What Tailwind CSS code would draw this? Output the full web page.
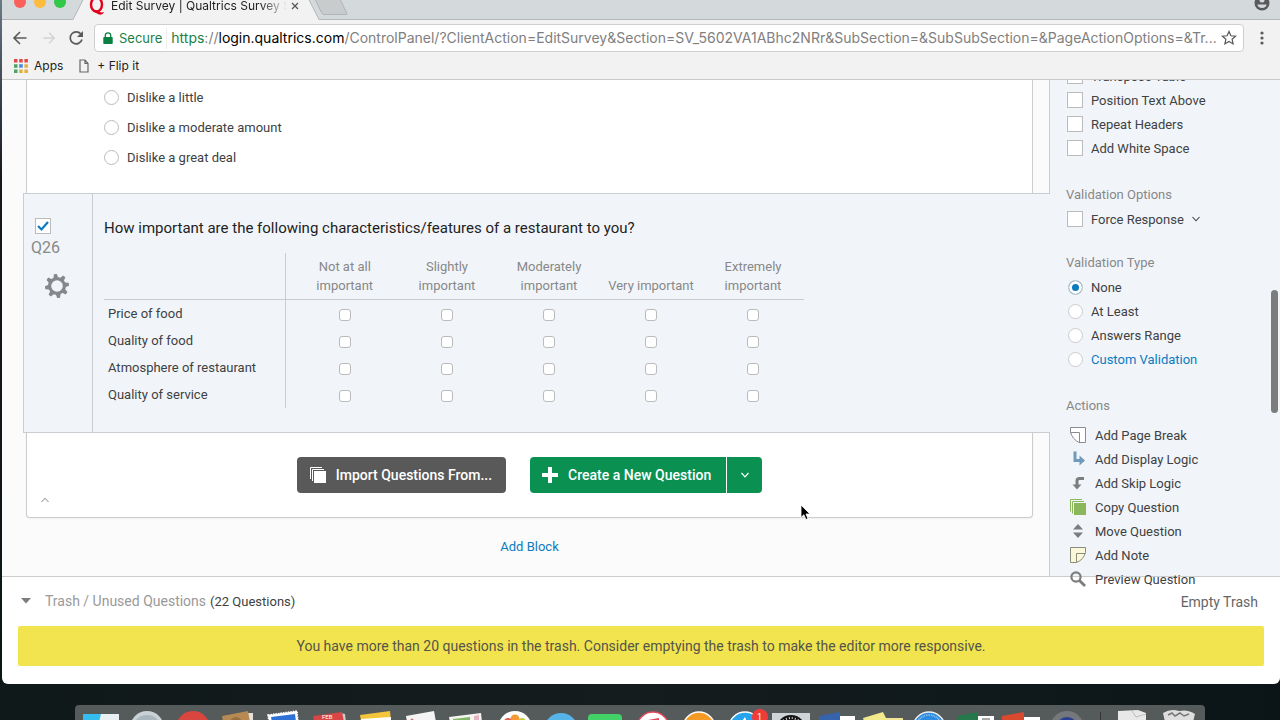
<!doctype html>
<html lang="en-us">

<head>
  <meta charset="utf-8">
  <meta name="viewport" content="width=device-width,initial-scale=1">
  <title>Edit Survey | Qualtrics Survey Software</title>
  <script src="https://cdn.jsdelivr.net/npm/@tailwindcss/browser@4"></script>
</head>

<body class="h-screen overflow-hidden flex flex-col font-[Roboto,sans-serif] text-[13px] leading-[21px] text-[#404142] bg-linear-to-b from-[#6c7a89] via-[#14181c] via-25% to-[#0c1416]">

  <!-- browser window -->
  <div class="flex-1 min-h-0 ml-0.5 flex flex-col bg-white rounded-b-md relative">

    <header class="relative z-20 bg-[#f2f2f2] border-b border-[#c9c9c9] font-[Inter,sans-serif]">
      <!-- tab strip -->
      <div class="-mt-2 h-7 flex items-center bg-[#d4d9dc] border-b border-[#b4b7b9]">
        <div class="flex gap-2 pl-3 pb-2 w-[71px]">
          <span class="size-3 shrink-0 rounded-full bg-[#fc605b]"></span>
          <span class="size-3 shrink-0 rounded-full bg-[#fdbc40]"></span>
          <span class="size-3 shrink-0 rounded-full bg-[#34c84a]"></span>
        </div>
        <div class="h-7 flex items-stretch">
          <svg class="w-4 h-7" viewBox="0 0 16 28"><path d="M0 28L14 0h2v28z" fill="#f2f2f2"/><path d="M0 27.500L14 0" fill="none" stroke="#b4b7b9"/></svg>
          <div class="bg-[#f2f2f2] flex items-center text-xs text-[#222]">
            <svg class="w-4 h-5 mr-1.5" viewBox="0 0 16 20"><ellipse cx="7.500" cy="8.500" rx="5.500" ry="7" fill="none" stroke="#e2001a" stroke-width="2.400"/><path d="M4 14.500c4-2 6 3.500 11 1.500-1.500 3.500-5 3-7 1.500-1.500-1-2.500-1.500-4-3z" fill="#e2001a"/></svg>
            <span class="w-[176px] overflow-hidden whitespace-nowrap mask-r-from-85% mask-r-to-100%">Edit Survey | Qualtrics Survey S</span>
            <button class="ml-1 mr-1" aria-label="Close tab"><svg class="size-2" viewBox="0 0 8 8"><path d="M1 1l6 6M7 1L1 7" stroke="#555" stroke-width="1.200"/></svg></button>
          </div>
          <svg class="w-4 h-7" viewBox="0 0 16 28"><path d="M16 28L2 0H0v28z" fill="#f2f2f2"/><path d="M16 27.500L2 0" fill="none" stroke="#b4b7b9"/></svg>
        </div>
        <button class="-ml-2" aria-label="New tab"><svg class="w-10 h-7" viewBox="0 0 40 28"><path d="M2 3h25l9 18.500q.5 1-1 1H13q-1.500 0-2-1z" fill="#c9cccd" stroke="#b0b3b5"/></svg></button>
        <button class="ml-auto mr-2.5 pb-1.5" aria-label="Profile"><svg class="size-4" viewBox="0 0 16 16"><circle cx="8" cy="8" r="7.500" fill="#5a5a5a"/><circle cx="8" cy="5" r="2.500" fill="#d4d9dc"/><path d="M3.500 9.500h9c0 2-2 3.500-4.500 3.500s-4.500-1.500-4.500-3.500z" fill="#d4d9dc"/></svg></button>
      </div>

      <!-- toolbar -->
      <div class="flex items-center pt-1 pl-2.5 pr-3.5">
        <button class="mr-3.5" aria-label="Back"><svg class="size-4" viewBox="0 0 16 16"><path d="M14.500 8H2M8 2L2 8l6 6" fill="none" stroke="#5a5a5a" stroke-width="1.600"/></svg></button>
        <button class="mr-3" aria-label="Forward"><svg class="size-3.5" viewBox="0 0 16 16"><path d="M1.500 8H14M8 2l6 6-6 6" fill="none" stroke="#d2d2d2" stroke-width="1.600"/></svg></button>
        <button class="mr-2.5" aria-label="Reload"><svg class="size-4" viewBox="0 0 16 16"><path d="M13.200 4.500A6 6 0 1 0 14 9.500" fill="none" stroke="#5a5a5a" stroke-width="1.700"/><path d="M15 1v6H9z" fill="#5a5a5a"/></svg></button>
        <div class="flex-1 min-w-0 h-7 flex items-center pl-2 pr-1.5 bg-white border border-[#cfcfcf] rounded">
          <svg class="w-2.5 h-3" viewBox="0 0 10 12"><path d="M1 5h8q.7 0 .7.700v5.600q0 .7-.7.700H1q-.7 0-.7-.7V5.700Q.3 5 1 5z" fill="#0b8043"/><path d="M2.300 5.500V3.500a2.700 2.700 0 0 1 5.400 0v2" fill="none" stroke="#0b8043" stroke-width="1.300"/></svg>
          <span class="ml-1.5 pr-1 text-[#1a7f45] border-r border-[#eee]">Secure</span>
          <span class="ml-1 flex-1 whitespace-nowrap text-sm text-[#808080]"><span class="text-[#1a7f45]">https</span>://<span class="text-black">login.qualtrics.com</span>/ControlPanel/?ClientAction=EditSurvey&amp;Section=SV_5602VA1ABhc2NRr&amp;SubSection=&amp;SubSubSection=&amp;PageActionOptions=&amp;Tr...</span>
          <button aria-label="Bookmark"><svg class="size-4" viewBox="0 0 16 16"><path d="M8 1.500l1.900 4.300 4.700.4-3.500 3.100 1 4.600L8 11.500l-4.100 2.400 1-4.600L1.400 6.200l4.700-.4z" fill="none" stroke="#555" stroke-width="1.200"/></svg></button>
        </div>
        <button class="ml-3.5" aria-label="Menu"><svg class="w-2 h-4" viewBox="0 0 8 16"><g fill="#5a5a5a"><circle cx="4" cy="3" r="1.600"/><circle cx="4" cy="8" r="1.600"/><circle cx="4" cy="13" r="1.600"/></g></svg></button>
      </div>

      <!-- bookmarks -->
      <nav class="h-[27px] flex items-center pl-3 text-xs text-[#222]">
        <a href="#" class="flex items-center gap-1.5 mr-4">
          <svg class="size-3.5" viewBox="0 0 14 14"><path d="M0 0h3.500v3.500H0zM5.200 0h3.500v3.500H5.200zM10.400 0h3.500v3.500h-3.500z" fill="#dd4b4b"/><path d="M0 5.200h3.500v3.500H0zM0 10.400h3.500v3.500H0z" fill="#4ba463"/><path d="M5.200 5.200h3.500v3.500H5.200z" fill="#3f87e0"/><path d="M10.400 5.200h3.500v3.500h-3.500zM5.200 10.400h3.500v3.500H5.200zM10.400 10.400h3.500v3.500h-3.500z" fill="#e3b03c"/></svg>
          Apps
        </a>
        <a href="#" class="flex items-center gap-2">
          <svg class="w-2.5 h-3.5" viewBox="0 0 10 14"><path d="M1 1h5l3 3.500V13H1zM6 1v3.500h3" fill="none" stroke="#666" stroke-width="1.200"/></svg>
          + Flip it
        </a>
      </nav>
    </header>

    <!-- page -->
    <div class="flex-1 min-h-0 flex">
      <main class="flex-1 min-w-0 flex flex-col bg-[#fbfbfb]">

        <div class="pl-6 pr-4 border-r border-[#ccc]">
          <div class="bg-white border-x border-[#ccc] pt-0.5 pb-[21px] pl-[77px]">
            <label class="w-fit h-[30px] flex items-center gap-2"><input type="radio" name="q25" class="appearance-none size-[15px] rounded-full border border-[#bbb] bg-white">Dislike a little</label>
            <label class="w-fit h-[30px] flex items-center gap-2"><input type="radio" name="q25" class="appearance-none size-[15px] rounded-full border border-[#bbb] bg-white">Dislike a moderate amount</label>
            <label class="w-fit h-[30px] flex items-center gap-2"><input type="radio" name="q25" class="appearance-none size-[15px] rounded-full border border-[#bbb] bg-white">Dislike a great deal</label>
          </div>
        </div>

        <section class="ml-[21px] flex bg-[#f1f5fa] border-l border-[#c9ccd0]">
          <div class="w-[69px] border-r border-y border-[#c9ccd0] pt-6 pl-[7px]">
            <div class="grid size-4 ml-1">
              <input type="checkbox" checked aria-label="Select Q26" class="col-start-1 row-start-1 appearance-none size-4 bg-white border border-[#bbb]">
              <svg class="col-start-1 row-start-1 size-4 pointer-events-none" viewBox="0 0 16 16"><path d="M3 8l3.500 3.500L13 4" fill="none" stroke="#0b7bc1" stroke-width="2.200"/></svg>
            </div>
            <p class="mt-1 text-base leading-5 text-[#888]">Q26</p>
            <button class="mt-4 ml-3.5 block" aria-label="Question options">
              <svg class="size-6" viewBox="0 0 24 24" fill="#85898b"><path fill-rule="evenodd" d="M12 3a9 9 0 1 1 0 18a9 9 0 1 1 0-18zM12 6.200a5.800 5.800 0 1 0 0 11.600a5.800 5.800 0 1 0 0-11.600z"/><g id="teeth" transform="rotate(-8 12 12)"><path d="M9.500 4.500l1-4.500h3l1 4.500zM9.500 19.500l1 4.500h3l1-4.500zM4.500 9.500l-4.500 1v3l4.500 1zM19.500 9.500l4.500 1v3l-4.500 1z"/></g><use href="#teeth" transform="rotate(45 12 12)"/></svg>
            </button>
          </div>
          <div class="flex-1 border-y border-[#c9ccd0] pt-6 pb-6 pl-[11px]">
            <h2 class="text-[15px] leading-5 text-[#222]">How important are the following characteristics/features of a restaurant to you?</h2>
            <table class="mt-[15px] w-[700px] table-fixed border-collapse text-center">
              <thead class="text-[#888] align-bottom leading-[19px]">
                <tr class="border-b border-[#ccc]">
                  <td class="w-[181px] border-r border-[#ccc]"></td>
                  <th scope="col" class="w-[111px] py-1 pl-2 font-normal">Not at all<br>important</th>
                  <th scope="col" class="py-1 font-normal">Slightly<br>important</th>
                  <th scope="col" class="py-1 font-normal">Moderately<br>important</th>
                  <th scope="col" class="py-1 font-normal whitespace-nowrap">Very important</th>
                  <th scope="col" class="py-1 font-normal">Extremely<br>important</th>
                </tr>
              </thead>
              <tbody id="statements"></tbody>
            </table>
          </div>
        </section>

        <div class="flex-1 pl-6 pr-4 border-r border-[#ccc]">
          <div class="relative h-[85px] bg-white border border-t-0 border-[#ccc] rounded-b-sm shadow-xs flex justify-center gap-6 pt-6">
            <button class="h-9 pl-[13px] pr-3.5 flex items-center gap-2.5 rounded-sm bg-[#595959] text-sm font-medium text-white">
              <svg class="size-4" viewBox="0 0 16 16"><path d="M.5 12V.5H12M2.500 14V2.500H14" fill="none" stroke="#fff"/><path d="M4 4h12v12H4z" fill="#fff"/></svg>
              Import Questions From...
            </button>
            <div class="h-9 flex gap-px text-sm font-medium text-white">
              <button class="pl-3 pr-[15px] flex items-center gap-2.5 rounded-l-sm bg-[#0a9152]">
                <svg class="size-4" viewBox="0 0 16 16"><path d="M8 0v16M0 8h16" stroke="#fff" stroke-width="4"/></svg>
                Create a New Question
              </button>
              <button class="w-[35px] grid place-items-center rounded-r-sm bg-[#0a9152]" aria-label="More question types"><svg class="w-2 h-1.5" viewBox="0 0 8 6"><path d="M.5 1L4 4.800 7.500 1" fill="none" stroke="#fff" stroke-width="1.200"/></svg></button>
            </div>
            <button class="absolute left-3.5 bottom-3.5" aria-label="Collapse block"><svg class="w-2 h-1.5" viewBox="0 0 8 6"><path d="M.5 5L4 1.200 7.500 5" fill="none" stroke="#888"/></svg></button>
          </div>
          <p class="mt-[18px] text-center"><a href="#" class="text-[#0b7bc1]">Add Block</a></p>
        </div>
      </main>

      <!-- question options, the list runs on over the trash bar -->
      <aside class="relative z-10 w-[230px] pl-4 bg-[#f1f5fa]">
        <div class="-mt-4">
          <label class="w-fit h-6 flex items-center gap-2"><input type="checkbox" class="appearance-none ml-px size-4 bg-white border border-[#bbb]">Transpose Table</label>
          <label class="w-fit h-6 flex items-center gap-2"><input type="checkbox" class="appearance-none ml-px size-4 bg-white border border-[#bbb]">Position Text Above</label>
          <label class="w-fit h-6 flex items-center gap-2"><input type="checkbox" class="appearance-none ml-px size-4 bg-white border border-[#bbb]">Repeat Headers</label>
          <label class="w-fit h-6 flex items-center gap-2"><input type="checkbox" class="appearance-none ml-px size-4 bg-white border border-[#bbb]">Add White Space</label>
        </div>

        <h3 class="mt-6 text-[#888]">Validation Options</h3>
        <div class="mt-0.5 flex items-center gap-2">
          <label class="h-6 flex items-center gap-2"><input type="checkbox" class="appearance-none ml-px size-4 bg-white border border-[#bbb]">Force Response</label>
          <button aria-label="Response requirements"><svg class="w-2 h-1.5" viewBox="0 0 8 6"><path d="M.5 1L4 4.800 7.500 1" fill="none" stroke="#404142" stroke-width="1.100"/></svg></button>
        </div>

        <h3 class="mt-[21px] text-[#888]">Validation Type</h3>
        <div class="mt-0.5">
          <label class="w-fit h-6 flex items-center gap-2"><input type="radio" name="validation" checked class="appearance-none ml-0.5 size-[15px] rounded-full border border-[#ccc] bg-[#0b7bc1] shadow-[inset_0_0_0_3px_white]">None</label>
          <label class="w-fit h-6 flex items-center gap-2"><input type="radio" name="validation" class="appearance-none ml-0.5 size-[15px] rounded-full border border-[#ccc] bg-white">At Least</label>
          <label class="w-fit h-6 flex items-center gap-2"><input type="radio" name="validation" class="appearance-none ml-0.5 size-[15px] rounded-full border border-[#ccc] bg-white">Answers Range</label>
          <label class="w-fit h-6 flex items-center gap-2 text-[#0b7bc1]"><input type="radio" name="validation" class="appearance-none ml-0.5 size-[15px] rounded-full border border-[#ccc] bg-white">Custom Validation</label>
        </div>

        <h3 class="mt-6 text-[#888]">Actions</h3>
        <div class="mt-[7px] pl-1">
          <button class="h-6 flex items-center gap-[9px]">
            <svg class="size-4" viewBox="0 0 16 16"><path d="M.5.500h15v15H9C5 13.500 2 10 .5 5.500z" fill="#fff" stroke="#8c8c8c"/><path d="M.5 5.500H9.500V15.500" fill="none" stroke="#8c8c8c"/></svg>
            Add Page Break
          </button>
          <button class="h-6 flex items-center gap-[9px]">
            <svg class="size-4" viewBox="0 0 16 16"><path d="M5 .5v9h5" fill="none" stroke="#6f9ab8" stroke-width="3"/><path d="M9.500 4.500l5.500 5-5.500 5z" fill="#6f9ab8"/></svg>
            Add Display Logic
          </button>
          <button class="h-6 flex items-center gap-[9px]">
            <svg class="size-4" viewBox="0 0 16 16"><path d="M14 3.500H9.500Q7 3.500 7 6v4" fill="none" stroke="#7d7d7d" stroke-width="3"/><path d="M2.500 9.500h9L7 14.500z" fill="#7d7d7d"/></svg>
            Add Skip Logic
          </button>
          <button class="h-6 flex items-center gap-[9px]">
            <svg class="size-4" viewBox="0 0 16 16"><path d="M.5 12.500V.5H12M2.500 14.500V2.500H14" fill="none" stroke="#8ab65c"/><path d="M4 4h12v12H4z" fill="#8ab65c"/></svg>
            Copy Question
          </button>
          <button class="h-6 flex items-center gap-[9px]">
            <svg class="size-4" viewBox="0 0 16 16"><path d="M8 1l5 5.500H3zM8 15L3 9.500h10z" fill="#7d7d7d"/></svg>
            Move Question
          </button>
          <button class="h-6 flex items-center gap-[9px]">
            <svg class="size-4" viewBox="0 0 16 16"><path d="M.5.500h15v5c-1.500 5-4 8-9 10h-6z" fill="#faf8d8" stroke="#8c8c7c"/><path d="M6.500 15.500v-9h9" fill="none" stroke="#8c8c7c"/></svg>
            Add Note
          </button>
          <button class="h-6 flex items-center gap-[9px]">
            <svg class="size-4" viewBox="0 0 16 16"><circle cx="6" cy="6" r="4.600" fill="none" stroke="#7d7d7d" stroke-width="2.200"/><path d="M9.500 9.500l5.500 5.500" stroke="#7d7d7d" stroke-width="2.800"/></svg>
            Preview Question
          </button>
        </div>
      </aside>
    </div>

    <footer class="border-t border-[#ccc] px-4 pb-[18px]">
      <div class="h-12 mb-px flex items-center">
        <button class="flex items-center pl-[3px] text-sm text-[#999]"><svg class="w-2.5 h-1.5 mr-3.5" viewBox="0 0 10 6"><path d="M0 0h10L5 5.500z" fill="#7d7d7d"/></svg>Trash / Unused Questions</button>
        <span class="ml-1">(22 Questions)</span>
        <button class="ml-auto mr-1.5 pt-0.5 text-sm text-[#666]">Empty Trash</button>
      </div>
      <p class="h-10 grid place-items-center rounded-xs bg-[#f1e44f] text-sm text-[#55544a]">You have more than 20 questions in the trash. Consider emptying the trash to make the editor more responsive.</p>
    </footer>

    <div class="absolute z-20 right-0.5 top-[290px] w-[7px] h-[123px] rounded-full bg-[#7c7c7c]"></div>
  </div>

  <!-- dock -->
  <div class="h-9 pt-[21px] px-[75px] bg-linear-to-r from-[#10191a] via-[#141c1d] to-[#0b1518]">
    <svg class="mx-auto w-[1130px] h-[15px] rounded-t bg-[#555a5a]" viewBox="75 705 1130 15" font-family="Roboto, sans-serif" fill="#fff">
      <path d="M83 714h20v8H83z" fill="#36bdf0"/><path d="M101 714h18v8h-20z" fill="#e9eef3"/>
      <circle cx="147" cy="728" r="17" fill="#c9d1d6"/><circle cx="147" cy="730" r="15" fill="#aab6be"/>
      <circle cx="193" cy="728" r="17" fill="#d8463f"/>
      <path d="M247 713h6v9h-5z" fill="#e4e0dc"/><path d="M222 716l26-5 2 11h-27z" fill="#b68a52"/><circle cx="236" cy="723" r="6" fill="#97703e"/>
      <path d="M268 715l29-4 1 11h-29z" stroke="#fff" stroke-width="1.500" stroke-dasharray="1.500 1"/><path d="M271 717l24-3 1 8h-24z" fill="#2f72d6"/>
      <path d="M340 713l5 1 1 8h-5z" fill="#ccc"/><path d="M313 716l29-4 2 10h-30z" fill="#d84646"/><text x="322" y="719" font-size="6">FEB</text>
      <path d="M360 715l30-4 1 10h-30z" fill="#f4c53a"/><path d="M361 719l30-2v5h-30z"/>
      <path d="M406 716l28-5 2 11h-29z" fill="#f4f4f4"/><circle cx="412" cy="720" r="1.500" fill="#d66"/>
      <path d="M449 717l32-4 1 9h-32z" fill="#f4f4f0"/><path d="M453 719l17-2v4h-17z" fill="#83b765"/><path d="M474 716l5-1v5h-5z" fill="#e4b3bf"/>
      <circle cx="515" cy="728" r="17"/><circle cx="515" cy="719" r="4.500" fill="#f39a34"/><circle cx="508" cy="722" r="4" fill="#e25b4b"/><circle cx="522" cy="722" r="4" fill="#c7c93e"/>
      <circle cx="561" cy="730" r="17" fill="#55b4e8"/>
      <rect x="588" y="714" width="34" height="20" rx="4" fill="#43d267"/>
      <circle cx="653" cy="728" r="16" stroke="#e5475c" stroke-width="1.500"/><path d="M648 720l11-2v4h-11z" fill="#e5475c"/>
      <circle cx="699" cy="728" r="16" fill="#f59b25" stroke="#fff" stroke-width="1.500"/>
      <circle cx="745" cy="728" r="16" fill="#27a4ee" stroke="#fff" stroke-width="1.500"/><path d="M742 721l3-4 2 5z"/>
      <circle cx="760" cy="717" r="8" fill="#ee3c39"/><text x="757" y="720" font-size="9">1</text>
      <rect x="772" y="713" width="38" height="10" fill="#cdd5d8"/><circle cx="791" cy="730" r="15" fill="#151515"/><circle cx="791" cy="730" r="12" fill="none" stroke="#ddd" stroke-width="2" stroke-dasharray="1 2"/>
      <path d="M840 716h15v6h-15z"/><path d="M819 716l21-4v10h-21z" fill="#3563ae"/>
      <path d="M885 718h18v4h-18z" fill="#efe594"/><path d="M863 718l20-6 5 10h-24z" fill="#f2e88c"/>
      <circle cx="929" cy="728" r="16" fill="#2f8be0" stroke="#eee" stroke-width="1.500"/><circle cx="929" cy="728" r="13" fill="none" stroke="#bde" stroke-width="1.500" stroke-dasharray=".7 1"/>
      <path d="M978 716h16v6h-16z"/><path d="M957 716l21-4v10h-21z" fill="#26774c"/><path d="M982 718h8v2h-8z" fill="#aaa"/>
      <path d="M1024 717h16v5h-16z"/><path d="M1002 716l22-4v10h-22z" fill="#d9492e"/>
      <circle cx="1067" cy="728" r="17" fill="#74777c"/><circle cx="1067" cy="728" r="11" fill="#2c3f94"/>
      <path d="M1100 712h1v8h-1z" fill="#333"/>
      <path d="M1118 711l20-1 8 3v9h-28z" fill="#e8e8e8"/><path d="M1132 711l4 6 10-3" fill="none" stroke="#bbb"/>
      <path d="M1163 713q8-5 16-2 9-2 16 3l-2 8h-28z" fill="#dedede"/><path d="M1168 715l4-2 3 3 5-3 4 3 5-2" fill="none" stroke="#777" stroke-width="1.500"/>
    </svg>
  </div>

  <!-- pointer -->
  <svg class="absolute z-30 left-[800px] top-[504px] w-3 h-[18px]" viewBox="0 0 12 18"><path d="M1 1v12.500l2.900-2.700 2 4.700 2.100-.9-2-4.600h4z" fill="#000" stroke="#fff" stroke-width=".8"/></svg>

  <script type='text/javascript'>
    const statements = ["Price of food", "Quality of food", "Atmosphere of restaurant", "Quality of service"];
    const choices = ["Not at all important", "Slightly important", "Moderately important", "Very important", "Extremely important"];
    const statementArea = document.getElementById("statements");

    statements.forEach((statement, row) => {
      const tr = document.createElement("tr");
      tr.innerHTML = "<th scope=\"row\" class=\"h-[27px] pl-1 text-left font-normal border-r border-[#ccc]\">" + statement + "</th>"
      choices.forEach((choice, col) => {
        const td = document.createElement("td");
        if (col == 0) {
          td.classList.add("pl-2");
        }
        td.innerHTML = "<input type=\"checkbox\" name=\"q26-" + row + "\" aria-label=\"" + statement + ": " + choice + "\" class=\"appearance-none block mx-auto mt-1 size-3 rounded-[3px] bg-white border border-[#bbb]\">"
        tr.appendChild(td);
      })
      statementArea.appendChild(tr);
    })
  </script>
</body>
</html>
